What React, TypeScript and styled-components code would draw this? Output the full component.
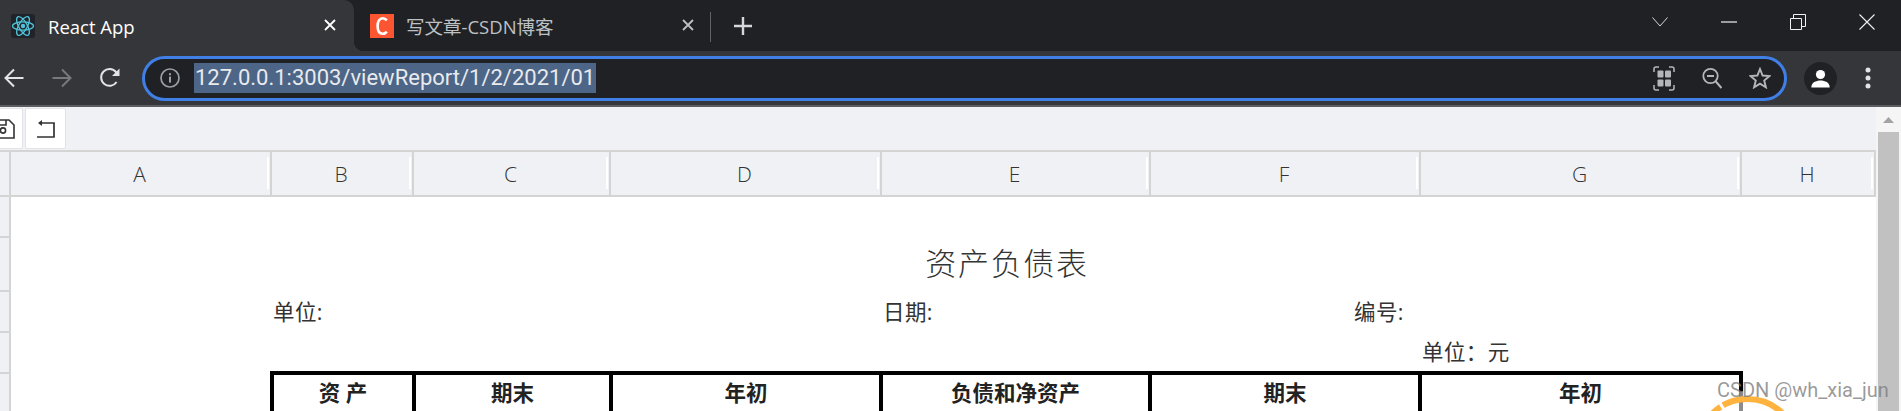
import React from "react";
import styled, { createGlobalStyle } from "styled-components";

const UI_FONT = `"Open Sans", "Noto Sans CJK SC", sans-serif`;

const columns = [
    { label: "A", width: 261 },
    { label: "B", width: 142 },
    { label: "C", width: 197 },
    { label: "D", width: 271 },
    { label: "E", width: 269 },
    { label: "F", width: 270 },
    { label: "G", width: 321 },
    { label: "H", width: 134 },
];
const sheetTemplate = columns.map((c) => `${c.width}px`).join(" ");
const rowHeaderHeights = [41, 54, 41, 41, 60];

const tableHeaders = ["资 产", "期末", "年初", "负债和净资产", "期末", "年初"];

const GlobalStyle = createGlobalStyle`
    html, body {
        margin: 0;
        padding: 0;
        height: 411px;
        overflow: hidden;
        background: #ffffff;
    }
`;

const Page = styled.div`
    position: relative;
    width: 1901px;
    height: 411px;
    overflow: hidden;
    display: flex;
    flex-direction: column;
    font-family: ${UI_FONT};
`;

const TabStrip = styled.div`
    height: 51px;
    flex: none;
    background: #202124;
    display: flex;
    align-items: stretch;
`;

const Tab = styled.div<{ $active?: boolean }>`
    position: relative;
    width: ${(p) => (p.$active ? "354px" : "356px")};
    flex: none;
    display: flex;
    align-items: center;
    box-sizing: border-box;
    padding: ${(p) => (p.$active ? "1px 18px 0 11px" : "1px 16px 0 16px")};
    column-gap: ${(p) => (p.$active ? "13px" : "12px")};
    background: ${(p) => (p.$active ? "#35363a" : "transparent")};
    border-top-right-radius: 10px;
    color: ${(p) => (p.$active ? "#ffffff" : "#bdc1c6")};
    font-size: 18.5px;

    ${(p) =>
        p.$active &&
        `&::after {
            content: "";
            position: absolute;
            right: -10px;
            bottom: 0;
            width: 10px;
            height: 10px;
            background: radial-gradient(circle at 100% 0, transparent 10px, #35363a 10.5px);
        }`}
`;

const TabTitle = styled.span`
    flex: 1;
    white-space: nowrap;
`;

const TabClose = styled.div`
    display: flex;
    margin-top: -2px;
`;

const TabDivider = styled.div`
    width: 1px;
    height: 30px;
    margin: 12px 0 0;
    background: #5f6368;
`;

const NewTab = styled.div`
    width: 64px;
    display: flex;
    align-items: center;
    justify-content: center;
`;

const WindowControls = styled.div`
    margin-left: auto;
    display: flex;
    height: 43px;
`;

const WindowButton = styled.div`
    width: 69px;
    display: flex;
    align-items: center;
    justify-content: center;
`;

const Toolbar = styled.div`
    height: 54px;
    flex: none;
    background: #35363a;
    border-bottom: 2px solid #5c5d60;
    display: flex;
    align-items: center;
    padding-right: 9px;
`;

const NavGroup = styled.div`
    display: flex;
    margin-left: -10px;
`;

const IconSlot = styled.div`
    width: 48px;
    height: 45px;
    flex: none;
    display: flex;
    align-items: center;
    justify-content: center;
`;

const Omnibox = styled.div`
    flex: 1;
    height: 45px;
    box-sizing: border-box;
    margin: 0 9px 0 8px;
    padding-left: 15px;
    display: flex;
    align-items: center;
    background: #202124;
    border: 3px solid #3f7fe6;
    border-radius: 23px;
`;

const UrlWrap = styled.div`
    flex: 1;
    margin-left: 14px;
    display: flex;
`;

const UrlSelected = styled.span`
    height: 30px;
    line-height: 30px;
    padding: 0 1px;
    background: #4d6586;
    color: #e8eaed;
    font-family: Roboto, sans-serif;
    font-size: 22px;
    white-space: nowrap;
`;

const Body = styled.div`
    flex: 1;
    min-height: 0;
    display: flex;
`;

const Sheet = styled.div`
    width: 1876px;
    flex: none;
    display: flex;
    flex-direction: column;
`;

const ActionBar = styled.div`
    height: 43px;
    flex: none;
    background: #f0f1f5;
    display: flex;
    column-gap: 2px;
    padding: 1px 0;
    box-sizing: border-box;
    margin-left: -18px;
`;

const ActionButton = styled.div`
    width: 41px;
    box-sizing: border-box;
    background: #ffffff;
    border: 1px solid #e3e3e6;
    border-radius: 2px;
    display: flex;
    align-items: center;
    justify-content: center;
`;

const ColumnHeader = styled.div`
    height: 47px;
    flex: none;
    box-sizing: border-box;
    display: flex;
    background: #f0f1f5;
    border-top: 2px solid #d4d4d4;
    border-bottom: 2px solid #d4d4d4;
    color: #333333;
    font-size: 21px;
    font-weight: 300;
`;

const CornerCell = styled.div`
    width: 11px;
    flex: none;
    box-sizing: border-box;
    border-right: 2px solid #d4d4d4;
`;

const ColumnCells = styled.div`
    display: grid;
    grid-template-columns: ${sheetTemplate};
`;

const ColumnCell = styled.div`
    position: relative;
    box-sizing: border-box;
    border-right: 2px solid #d4d4d4;
    display: flex;
    align-items: center;
    justify-content: center;
    padding-right: 2px;

    &::after {
        content: "";
        position: absolute;
        top: 5px;
        bottom: 6px;
        right: 1px;
        width: 2px;
        background: #ffffff;
    }
`;

const SheetBody = styled.div`
    flex: 1;
    min-height: 0;
    display: flex;
`;

const RowHeader = styled.div`
    width: 11px;
    flex: none;
    display: flex;
    flex-direction: column;
`;

const RowHeaderCell = styled.div<{ $height: number }>`
    height: ${(p) => p.$height}px;
    flex: none;
    box-sizing: border-box;
    background: #f0f1f5;
    border-right: 2px solid #d4d4d4;
    border-bottom: 2px solid #d4d4d4;
`;

const Report = styled.div`
    flex: 1;
    display: flex;
    flex-direction: column;
    background: #ffffff;
    color: #333333;
    font-size: 21.5px;
`;

const ReportRow = styled.div<{ $height: number }>`
    height: ${(p) => p.$height}px;
    flex: none;
    display: grid;
    grid-template-columns: ${sheetTemplate};
    align-items: center;
`;

const ReportTitle = styled.div`
    grid-column: 2 / 8;
    text-align: center;
    font-family: "Liberation Serif", "Noto Sans CJK SC", serif;
    font-size: 31px;
    font-weight: 300;
    letter-spacing: 1.7px;
    padding-bottom: 5px;
`;

const InfoCell = styled.div<{ $column: number; $indent?: number }>`
    grid-column: ${(p) => p.$column};
    padding-left: ${(p) => p.$indent ?? 1}px;
    padding-bottom: 3px;
    letter-spacing: 0.4px;
    white-space: nowrap;
`;

const TableRow = styled.div`
    margin-left: 259px;
    display: grid;
    grid-template-columns: 142px 197px 270px 269px 270px 325px;
    font-weight: 700;
    color: #222222;
`;

const TableCell = styled.div<{ $last?: boolean }>`
    height: 60px;
    box-sizing: border-box;
    border-top: 4px solid #000000;
    border-left: 4px solid #000000;
    border-right: ${(p) => (p.$last ? "4px solid #000000" : "0")};
    padding-top: 3px;
    line-height: 30px;
    text-align: center;
    font-size: 21.5px;
`;

const ScrollTrack = styled.div`
    flex: 1;
    display: flex;
    flex-direction: column;
    align-items: center;
    background: #f5f5f5;
`;

const ScrollArrow = styled.div`
    height: 25px;
    flex: none;
    display: flex;
    align-items: center;
    justify-content: center;
    padding-top: 1px;
    box-sizing: border-box;
`;

const ScrollThumb = styled.div`
    width: 21px;
    flex: 1;
    background: #c1c1c1;
`;

const Watermark = styled.div`
    position: absolute;
    left: 1717px;
    top: 375px;
    color: rgba(120, 120, 120, 0.75);
    font-family: Roboto, sans-serif;
    font-size: 20px;
    line-height: 30px;
    white-space: nowrap;
`;

const Badge = styled.svg`
    position: absolute;
    left: 1680px;
    top: 380px;
`;

const ReactLogo = () => (
    <svg width="24" height="24" viewBox="0 0 24 24">
        <rect width="24" height="24" rx="3" fill="#20232a" />
        <g fill="none" stroke="#4fc4d8" strokeWidth="1.3">
            <ellipse cx="12" cy="12" rx="10.5" ry="4.2" />
            <ellipse cx="12" cy="12" rx="10.5" ry="4.2" transform="rotate(60 12 12)" />
            <ellipse cx="12" cy="12" rx="10.5" ry="4.2" transform="rotate(120 12 12)" />
        </g>
        <circle cx="12" cy="12" r="2.2" fill="#4fc4d8" />
    </svg>
);

const CsdnLogo = () => (
    <svg width="24" height="24" viewBox="0 0 24 24">
        <rect width="24" height="24" fill="#fc5531" />
        <path
            d="M16.8 6.4 C15.6 4.8 14.2 4.2 12.8 4.2 C9.4 4.2 7.6 7.4 7.6 12 C7.6 16.6 9.4 19.8 12.8 19.8 C14.2 19.8 15.6 19.2 16.8 17.6"
            fill="none"
            stroke="#ffffff"
            strokeWidth="2.6"
        />
    </svg>
);

const CloseGlyph = ({ color }: { color: string }) => (
    <svg width="12" height="12" viewBox="0 0 12 12">
        <path d="M1 1 L11 11 M11 1 L1 11" stroke={color} strokeWidth="1.8" />
    </svg>
);

const PlusGlyph = () => (
    <svg width="18" height="18" viewBox="0 0 18 18">
        <path d="M9 0 V18 M0 9 H18" stroke="#d5d7da" strokeWidth="2.4" />
    </svg>
);

const ChevronGlyph = () => (
    <svg width="16" height="10" viewBox="0 0 16 10">
        <path d="M0.5 0.5 L8 9 L15.5 0.5" fill="none" stroke="#d8d9db" strokeWidth="1" />
    </svg>
);

const MinimizeGlyph = () => (
    <svg width="16" height="2" viewBox="0 0 16 2">
        <path d="M0 1 H16" stroke="#f1f1f1" strokeWidth="1.2" />
    </svg>
);

const RestoreGlyph = () => (
    <svg width="16" height="16" viewBox="0 0 16 16">
        <path
            d="M0.5 4.5 H11.5 V15.5 H0.5 Z M3.5 4.5 V0.5 H15.5 V12.5 H11.5"
            fill="none"
            stroke="#f1f1f1"
            strokeWidth="1"
        />
    </svg>
);

const CloseWindowGlyph = () => (
    <svg width="16" height="16" viewBox="0 0 16 16">
        <path d="M0.5 0.5 L15.5 15.5 M15.5 0.5 L0.5 15.5" stroke="#f1f1f1" strokeWidth="1.1" />
    </svg>
);

const ArrowGlyph = ({ color, flip }: { color: string; flip?: boolean }) => (
    <svg
        width="20"
        height="20"
        viewBox="0 0 20 20"
        style={flip ? { transform: "scaleX(-1)" } : undefined}
    >
        <path d="M19.5 10 H1.5 M10 1.5 L1.5 10 L10 18.5" fill="none" stroke={color} strokeWidth="2" />
    </svg>
);

const ReloadGlyph = () => (
    <svg width="22" height="22" viewBox="0 0 22 22">
        <path
            d="M17.6 15 A8.4 8.4 0 1 1 17 5 L19.5 7.6"
            fill="none"
            stroke="#e3e4e6"
            strokeWidth="2"
        />
        <path d="M20.5 1.5 V9 H13 Z" fill="#e3e4e6" />
    </svg>
);

const InfoGlyph = () => (
    <svg width="20" height="20" viewBox="0 0 20 20">
        <circle cx="10" cy="10" r="9" fill="none" stroke="#9aa0a6" strokeWidth="1.7" />
        <rect x="9" y="8.6" width="2" height="6" fill="#9aa0a6" />
        <rect x="9" y="5.2" width="2" height="2" fill="#9aa0a6" />
    </svg>
);

const QrGlyph = () => (
    <svg width="22" height="25" viewBox="0 0 22 25">
        <path
            d="M1 6 V3 Q1 1 3 1 H6 M16 1 H19 Q21 1 21 3 V6 M21 19 V22 Q21 24 19 24 H16 M6 24 H3 Q1 24 1 22 V19"
            fill="none"
            stroke="#b4b6b9"
            strokeWidth="1.5"
        />
        <rect x="4.5" y="4.5" width="6" height="7" rx="1" fill="#b4b6b9" />
        <rect x="12" y="4.5" width="6" height="7" rx="1" fill="#b4b6b9" />
        <rect x="4.5" y="13.5" width="6" height="7" rx="1" fill="#b4b6b9" />
        <rect x="12" y="13.5" width="6" height="7" rx="1" fill="#b4b6b9" />
    </svg>
);

const ZoomOutGlyph = () => (
    <svg width="20" height="22" viewBox="0 0 20 22">
        <circle cx="8.5" cy="9" r="7.2" fill="none" stroke="#b4b6b9" strokeWidth="1.8" />
        <path d="M5 9 H12 M13.8 14.5 L19.5 21" stroke="#b4b6b9" strokeWidth="2" />
    </svg>
);

const StarGlyph = () => (
    <svg width="22" height="22" viewBox="0 0 22 22">
        <path
            d="M11 2 L13.6 8.5 L20.6 9 L15.2 13.5 L16.9 20.3 L11 16.6 L5.1 20.3 L6.8 13.5 L1.4 9 L8.4 8.5 Z"
            fill="none"
            stroke="#b4b6b9"
            strokeWidth="1.9"
        />
    </svg>
);

const AvatarGlyph = () => (
    <svg width="33" height="33" viewBox="0 0 33 33">
        <circle cx="16.5" cy="16.5" r="16.5" fill="#202124" />
        <circle cx="16.5" cy="12.5" r="4.6" fill="#ffffff" />
        <path d="M7.3 25.5 C7.3 20.6 12 18.6 16.5 18.6 C21 18.6 25.7 20.6 25.7 25.5 Z" fill="#ffffff" />
    </svg>
);

const KebabGlyph = () => (
    <svg width="6" height="22" viewBox="0 0 6 22">
        <circle cx="3" cy="3" r="2.5" fill="#e3e4e6" />
        <circle cx="3" cy="11" r="2.5" fill="#e3e4e6" />
        <circle cx="3" cy="19" r="2.5" fill="#e3e4e6" />
    </svg>
);

const SaveGlyph = () => (
    <svg width="24" height="20" viewBox="0 0 24 20">
        <path
            d="M1 1 H18 L23 6 V19 H1 Z M5 1 V6 H15 V1"
            fill="none"
            stroke="#333333"
            strokeWidth="1.6"
        />
        <circle cx="12" cy="11.5" r="2.6" fill="none" stroke="#333333" strokeWidth="1.6" />
    </svg>
);

const ReturnGlyph = () => (
    <svg width="18" height="18" viewBox="0 0 18 18">
        <path d="M4 3 H17 V17 H0" fill="none" stroke="#333333" strokeWidth="1.7" />
        <path d="M5 0 V6 L1 3 Z" fill="#333333" />
    </svg>
);

const ScrollUpGlyph = () => (
    <svg width="11" height="6" viewBox="0 0 11 6">
        <path d="M5.5 0 L11 6 H0 Z" fill="#a3a3a3" />
    </svg>
);

export default function App() {
    return (
        <Page>
            <GlobalStyle />
            <TabStrip>
                <Tab $active>
                    <ReactLogo />
                    <TabTitle>React App</TabTitle>
                    <TabClose>
                        <CloseGlyph color="#ffffff" />
                    </TabClose>
                </Tab>
                <Tab>
                    <CsdnLogo />
                    <TabTitle>写文章-CSDN博客</TabTitle>
                    <TabClose>
                        <CloseGlyph color="#bdc1c6" />
                    </TabClose>
                </Tab>
                <TabDivider />
                <NewTab>
                    <PlusGlyph />
                </NewTab>
                <WindowControls>
                    <WindowButton>
                        <ChevronGlyph />
                    </WindowButton>
                    <WindowButton>
                        <MinimizeGlyph />
                    </WindowButton>
                    <WindowButton>
                        <RestoreGlyph />
                    </WindowButton>
                    <WindowButton>
                        <CloseWindowGlyph />
                    </WindowButton>
                </WindowControls>
            </TabStrip>

            <Toolbar>
                <NavGroup>
                    <IconSlot>
                        <ArrowGlyph color="#e3e4e6" />
                    </IconSlot>
                    <IconSlot>
                        <ArrowGlyph color="#77797c" flip />
                    </IconSlot>
                    <IconSlot>
                        <ReloadGlyph />
                    </IconSlot>
                </NavGroup>
                <Omnibox>
                    <InfoGlyph />
                    <UrlWrap>
                        <UrlSelected>127.0.0.1:3003/viewReport/1/2/2021/01</UrlSelected>
                    </UrlWrap>
                    <IconSlot>
                        <QrGlyph />
                    </IconSlot>
                    <IconSlot>
                        <ZoomOutGlyph />
                    </IconSlot>
                    <IconSlot>
                        <StarGlyph />
                    </IconSlot>
                </Omnibox>
                <IconSlot>
                    <AvatarGlyph />
                </IconSlot>
                <IconSlot>
                    <KebabGlyph />
                </IconSlot>
            </Toolbar>

            <Body>
                <Sheet>
                    <ActionBar>
                        <ActionButton>
                            <SaveGlyph />
                        </ActionButton>
                        <ActionButton>
                            <ReturnGlyph />
                        </ActionButton>
                    </ActionBar>
                    <ColumnHeader>
                        <CornerCell />
                        <ColumnCells>
                            {columns.map((c) => (
                                <ColumnCell key={c.label}>{c.label}</ColumnCell>
                            ))}
                        </ColumnCells>
                    </ColumnHeader>
                    <SheetBody>
                        <RowHeader>
                            {rowHeaderHeights.map((h, i) => (
                                <RowHeaderCell key={i} $height={h} />
                            ))}
                        </RowHeader>
                        <Report>
                            <ReportRow $height={40} />
                            <ReportRow $height={54}>
                                <ReportTitle>资产负债表</ReportTitle>
                            </ReportRow>
                            <ReportRow $height={41}>
                                <InfoCell $column={2}>单位:</InfoCell>
                                <InfoCell $column={5}>日期:</InfoCell>
                                <InfoCell $column={6} $indent={203}>
                                    编号:
                                </InfoCell>
                            </ReportRow>
                            <ReportRow $height={39}>
                                <InfoCell $column={7}>单位：元</InfoCell>
                            </ReportRow>
                            <TableRow>
                                {tableHeaders.map((label, i) => (
                                    <TableCell key={i} $last={i === tableHeaders.length - 1}>
                                        {label}
                                    </TableCell>
                                ))}
                            </TableRow>
                        </Report>
                    </SheetBody>
                </Sheet>
                <ScrollTrack>
                    <ScrollArrow>
                        <ScrollUpGlyph />
                    </ScrollArrow>
                    <ScrollThumb />
                </ScrollTrack>
            </Body>

            <Badge width="140" height="31" viewBox="0 0 140 31">
                <circle cx="67.5" cy="69" r="58" fill="#ffffff" fillOpacity="0.55" />
                <circle cx="67.5" cy="69" r="50" fill="none" stroke="#fdb33e" strokeWidth="6" />
                <path d="M43.9 29.5 L39.8 22.7" stroke="#ffffff" strokeWidth="3" />
            </Badge>
            <Watermark>CSDN @wh_xia_jun</Watermark>
        </Page>
    );
}
